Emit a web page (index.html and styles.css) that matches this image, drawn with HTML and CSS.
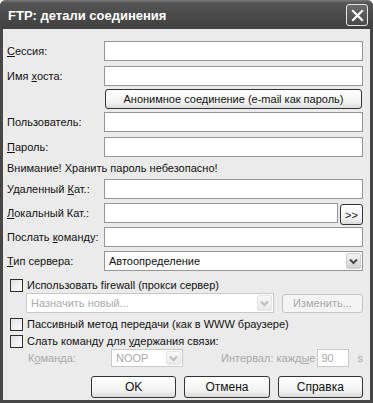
FILE: index.html
```html
<!DOCTYPE html>
<html lang="ru">
    <head>
        <meta charset="UTF-8">
        <meta name="viewport" content="width=device-width, initial-scale=1.0">
        <title>FTP: детали соединения</title>
        <link rel="stylesheet" href="styles.css">
    </head>
    <body>
        <div class="window">
            <div class="titlebar">
                <span class="title">FTP: детали соединения</span>
                <span class="close">
                    <svg width="13" height="13" viewBox="0 0 13 13">
                        <path d="M2 2 L11 11 M11 2 L2 11" stroke="#fff" stroke-width="2.2" stroke-linecap="square"/>
                    </svg>
                </span>
            </div>
            <form class="content">
                <div class="row">
                    <label class="lbl"><u>С</u>ессия:</label>
                    <input type="text" class="field">
                </div>
                <div class="row mt5">
                    <label class="lbl">Имя <u>х</u>оста:</label>
                    <input type="text" class="field">
                </div>
                <div class="row mt3">
                    <span class="lbl"></span>
                    <button type="button" class="btn wide">Анонимное соединение (e-mail как пароль)</button>
                </div>
                <div class="row mt3">
                    <label class="lbl">Пользователь:</label>
                    <input type="text" class="field">
                </div>
                <div class="row mt5">
                    <label class="lbl"><u>П</u>ароль:</label>
                    <input type="password" class="field">
                </div>
                <div class="note">Внимание! Хранить пароль небезопасно!</div>
                <div class="row">
                    <label class="lbl">Удаленный <u>К</u>ат.:</label>
                    <input type="text" class="field">
                </div>
                <div class="row mt4">
                    <label class="lbl"><u>Л</u>окальный Кат.:</label>
                    <input type="text" class="field short">
                    <button type="button" class="btn browse">&gt;&gt;</button>
                </div>
                <div class="row mt4">
                    <label class="lbl">Послать <u>к</u>оманду:</label>
                    <input type="text" class="field">
                </div>
                <div class="row mt4">
                    <label class="lbl"><u>Т</u>ип сервера:</label>
                    <div class="select">
                        <span class="select-text">Автоопределение</span>
                        <span class="arrow">
                            <svg width="9" height="7" viewBox="0 0 9 7"><path d="M1 1.5 L4.5 5 L8 1.5" stroke="#4d4d4d" stroke-width="2" fill="none"/></svg>
                        </span>
                    </div>
                </div>
                <div class="check-row mt6">
                    <span class="box"></span>
                    <span>Использовать firewall (прокси сервер)</span>
                </div>
                <div class="row proxy">
                    <div class="select disabled proxy-select">
                        <span class="select-text">Назначить новый...</span>
                        <span class="arrow">
                            <svg width="9" height="7" viewBox="0 0 9 7"><path d="M1 1.5 L4.5 5 L8 1.5" stroke="#bdbdbd" stroke-width="2" fill="none"/></svg>
                        </span>
                    </div>
                    <button type="button" class="btn disabled edit" disabled>Изменить...</button>
                </div>
                <div class="check-row mt3">
                    <span class="box"></span>
                    <span>Пассивный метод передачи (как в WWW браузере)</span>
                </div>
                <div class="check-row mt1">
                    <span class="box"></span>
                    <span>Слать команду для <u>у</u>держания связи:</span>
                </div>
                <div class="row keep">
                    <span class="muted cmd-lbl">К<u>о</u>манда:</span>
                    <div class="select disabled noop">
                        <span class="select-text">NOOP</span>
                        <span class="arrow">
                            <svg width="9" height="7" viewBox="0 0 9 7"><path d="M1 1.5 L4.5 5 L8 1.5" stroke="#bdbdbd" stroke-width="2" fill="none"/></svg>
                        </span>
                    </div>
                    <span class="muted interval">Интервал: кажд<u>ы</u>е</span>
                    <span class="field disabled secs">90</span>
                    <span class="muted unit">s</span>
                </div>
                <div class="buttons">
                    <button type="button" class="btn">OK</button>
                    <button type="button" class="btn">Отмена</button>
                    <button type="button" class="btn">Справка</button>
                </div>
            </form>
        </div>
    </body>
</html>
```

FILE: styles.css
```css
body{
    margin: 0;
    font-family: "Liberation Sans", Arial, sans-serif;
    font-size: 11px;
    color: #111;
}
.window{
    width: 373px;
    height: 403px;
    background: #474747;
    display: flex;
    flex-direction: column;
    border-radius: 6px 6px 0 0;
    overflow: hidden;
}
.titlebar{
    height: 29px;
    display: flex;
    align-items: center;
    justify-content: space-between;
    padding: 0 5px 0 8px;
    background: linear-gradient(#7a7a7a, #555 3px, #4b4b4b 50%, #414141);
}
.title{
    color: #fff;
    font-weight: bold;
    font-size: 13px;
    margin-top: 1px;
}
.close{
    width: 20px;
    height: 20px;
    border: 1px solid #e6e6e6;
    border-radius: 3px;
    background: linear-gradient(#6a6a6a, #4a4a4a);
    display: flex;
    align-items: center;
    justify-content: center;
    margin-top: 1px;
}
.content{
    flex: 1;
    margin: 0 3px 3px 3px;
    background: #ebebeb;
    padding: 12px 7px 0 4px;
    display: flex;
    flex-direction: column;
}
.row{
    display: flex;
    align-items: center;
    height: 20px;
}
.mt1{ margin-top: 1px; }
.mt3{ margin-top: 3px; }
.mt4{ margin-top: 4px; }
.mt5{ margin-top: 5px; }
.mt6{ margin-top: 6px; }
.lbl{
    width: 97px;
    flex: none;
}
u{
    text-decoration: underline;
    text-underline-offset: 1px;
}
.field{
    flex: 1;
    height: 20px;
    box-sizing: border-box;
    border: 1px solid #959595;
    background: #fff;
    margin: 0;
    padding: 1px 3px;
    font: inherit;
}
.field.short{
    flex: none;
    width: 234px;
}
.btn{
    box-sizing: border-box;
    height: 21px;
    border: 1px solid #333;
    border-radius: 3px;
    background: linear-gradient(#fff, #f2f2f2 70%, #dadada);
    font: inherit;
    color: #111;
    padding: 0;
    margin: 0;
}
.btn.wide{
    flex: 1;
    margin-left: 1px;
    margin-right: 1px;
    height: 20px;
}
.btn.browse{
    width: 23px;
    margin-left: 2px;
    align-self: flex-start;
    margin-top: 1px;
}
.note{
    height: 22px;
    line-height: 22px;
}
.select{
    flex: 1;
    height: 20px;
    box-sizing: border-box;
    border: 1px solid #959595;
    background: #fff;
    display: flex;
    align-items: center;
    justify-content: space-between;
    padding: 0 1px 0 4px;
}
.arrow{
    width: 15px;
    height: 16px;
    box-sizing: border-box;
    border: 1px solid #cfcfcf;
    border-radius: 2px;
    background: linear-gradient(#f4f4f4, #d2d2d2);
    display: flex;
    align-items: center;
    justify-content: center;
}
.check-row{
    display: flex;
    align-items: center;
    height: 16px;
    gap: 4px;
    padding-left: 3px;
}
.box{
    width: 13px;
    height: 13px;
    box-sizing: border-box;
    border: 1px solid #2e2e2e;
    background: linear-gradient(135deg, #e2e2e2, #fbfbfb);
}
.disabled{
    color: #a9a9a9;
    border-color: #c9c9c9;
}
.select.disabled .arrow{
    border-color: #e4e4e4;
    background: linear-gradient(#f7f7f7, #e9e9e9);
}
.btn.disabled{
    background: #f4f4f4;
    border-color: #c4c4c4;
    color: #a8a8a8;
}
.proxy{
    padding-left: 19px;
}
.proxy-select{
    flex: none;
    width: 248px;
}
.edit{
    width: 86px;
    margin-left: 8px;
    height: 19px;
}
.keep{
    height: 18px;
    padding-left: 21px;
}
.muted{
    color: #a9a9a9;
}
.cmd-lbl{
    width: 83px;
}
.noop{
    flex: none;
    width: 72px;
    height: 18px;
}
.noop .arrow{
    height: 14px;
}
.interval{
    margin-left: 38px;
}
.secs{
    flex: none;
    width: 32px;
    height: 18px;
    margin-left: 2px;
    line-height: 14px;
}
.unit{
    margin-left: 8px;
}
.buttons{
    display: flex;
    gap: 8px;
    padding-left: 84px;
    margin-top: 9px;
}
.buttons .btn{
    width: 87px;
    height: 22px;
    font-size: 12px;
}
```
